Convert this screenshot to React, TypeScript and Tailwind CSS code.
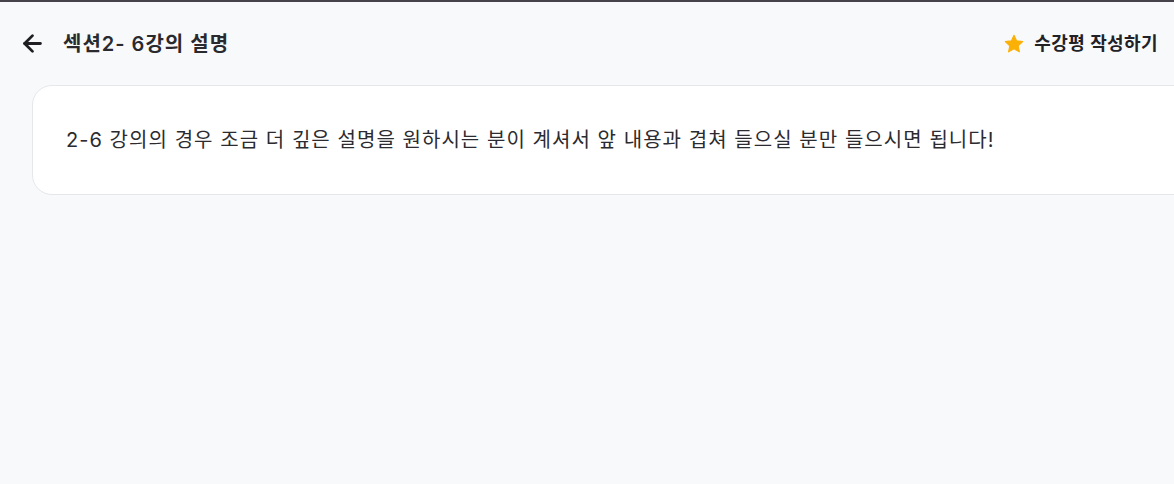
import { ArrowLeft } from 'lucide-react';

export default function App() {
  return (
    <div
      className="w-[1174px] h-[484px] overflow-hidden bg-[#f8f9fb] border-t-2 border-[#46434b]"
      style={{ fontFamily: 'Inter, "Noto Sans CJK KR", "Noto Sans", sans-serif' }}
    >
      <header className="flex items-center justify-between h-[83px] pl-[19px] pr-[16px]">
        <div className="flex items-center gap-[17px]">
          <ArrowLeft size={27} strokeWidth={2.5} className="text-[#1f1f23]" />
          <h1 className="text-[20px] font-semibold text-[#2a2a2e] tracking-[1px]">섹션2- 6강의 설명</h1>
        </div>
        <button className="flex items-center gap-[9px] text-[18px] font-semibold text-[#222226] tracking-[0.4px]">
          <svg width="22" height="22" viewBox="0 0 24 24">
            <path
              d="M12 2.5l2.9 6.1 6.6.8-4.9 4.6 1.3 6.6L12 17.3l-5.9 3.3 1.3-6.6-4.9-4.6 6.6-.8z"
              fill="#fbb006"
              stroke="#fbb006"
              strokeWidth="1.2"
              strokeLinejoin="round"
            />
          </svg>
          수강평 작성하기
        </button>
      </header>
      <div className="pl-[32px]">
        <div className="w-[1200px] h-[110px] bg-white border border-[#e6e7ea] rounded-[20px] flex items-center pl-[33px]">
          <p className="text-[20px] text-[#2b2b30] tracking-[1.05px]">
            2-6 강의의 경우 조금 더 깊은 설명을 원하시는 분이 계셔서 앞 내용과 겹쳐 들으실 분만 들으시면 됩니다!
          </p>
        </div>
      </div>
    </div>
  );
}
